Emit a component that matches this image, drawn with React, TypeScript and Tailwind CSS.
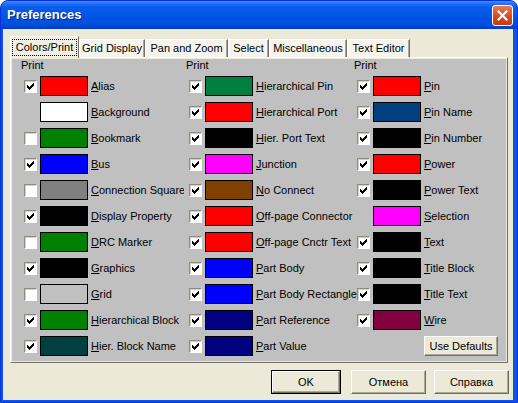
import React from "react";

type Item = { label: string; swatch: string; check: boolean | null };

const col1: Item[] = [
  { label: "Alias", swatch: "bg-[#ff0000]", check: true },
  { label: "Background", swatch: "bg-[#ffffff]", check: null },
  { label: "Bookmark", swatch: "bg-[#008000]", check: false },
  { label: "Bus", swatch: "bg-[#0000ff]", check: true },
  { label: "Connection Square", swatch: "bg-[#808080]", check: false },
  { label: "Display Property", swatch: "bg-[#000000]", check: true },
  { label: "DRC Marker", swatch: "bg-[#008000]", check: false },
  { label: "Graphics", swatch: "bg-[#000000]", check: true },
  { label: "Grid", swatch: "bg-[#c0c0c0]", check: false },
  { label: "Hierarchical Block", swatch: "bg-[#008000]", check: true },
  { label: "Hier. Block Name", swatch: "bg-[#004040]", check: true },
];

const col2: Item[] = [
  { label: "Hierarchical Pin", swatch: "bg-[#008040]", check: true },
  { label: "Hierarchical Port", swatch: "bg-[#ff0000]", check: true },
  { label: "Hier. Port Text", swatch: "bg-[#000000]", check: true },
  { label: "Junction", swatch: "bg-[#ff00ff]", check: true },
  { label: "No Connect", swatch: "bg-[#804000]", check: true },
  { label: "Off-page Connector", swatch: "bg-[#ff0000]", check: true },
  { label: "Off-page Cnctr Text", swatch: "bg-[#ff0000]", check: true },
  { label: "Part Body", swatch: "bg-[#0000ff]", check: true },
  { label: "Part Body Rectangle", swatch: "bg-[#0000ff]", check: true },
  { label: "Part Reference", swatch: "bg-[#000080]", check: true },
  { label: "Part Value", swatch: "bg-[#000080]", check: true },
];

const col3: Item[] = [
  { label: "Pin", swatch: "bg-[#ff0000]", check: true },
  { label: "Pin Name", swatch: "bg-[#004080]", check: true },
  { label: "Pin Number", swatch: "bg-[#000000]", check: true },
  { label: "Power", swatch: "bg-[#ff0000]", check: true },
  { label: "Power Text", swatch: "bg-[#000000]", check: true },
  { label: "Selection", swatch: "bg-[#ff00ff]", check: null },
  { label: "Text", swatch: "bg-[#000000]", check: true },
  { label: "Title Block", swatch: "bg-[#000000]", check: true },
  { label: "Title Text", swatch: "bg-[#000000]", check: true },
  { label: "Wire", swatch: "bg-[#800040]", check: true },
];

const tabs = ["Grid Display", "Pan and Zoom", "Select", "Miscellaneous", "Text Editor"];
const tabWidths = ["w-[66px]", "w-[83px]", "w-[41px]", "w-[78px]", "w-[63px]"];

function CheckBox({ checked }: { checked: boolean }) {
  return (
    <span className="flex h-[13px] w-[13px] shrink-0 items-center justify-center border border-t-[#8e8b80] border-l-[#8e8b80] border-r-white border-b-white bg-white shadow-[inset_1px_1px_0_#d4d0c8]">
      {checked && (
        <svg width="7" height="7" viewBox="0 0 7 7" shapeRendering="crispEdges">
          <path
            d="M6 0h1v1h-1z M5 1h2v1h-2z M0 2h1v1h-1z M4 2h3v1h-3z M0 3h2v1h-2z M3 3h3v1h-3z M0 4h5v1h-5z M1 5h3v1h-3z M2 6h1v1h-1z"
            fill="#000"
          />
        </svg>
      )}
    </span>
  );
}

function Row({ item, labelClass }: { item: Item; labelClass: string }) {
  return (
    <div className="flex h-[20px] items-center">
      <div className="ml-[3px] w-[13px] shrink-0">
        {item.check !== null && <CheckBox checked={item.check} />}
      </div>
      <div className={`ml-[3px] h-[20px] w-[48px] shrink-0 border border-black ${item.swatch}`} />
      <div className={`ml-[3px] whitespace-nowrap leading-[13px] ${labelClass}`}>
        <span className="underline underline-offset-[1px]">{item.label[0]}</span>
        {item.label.slice(1)}
      </div>
    </div>
  );
}

function Column({ items, width, labelClass, children }: { items: Item[]; width: string; labelClass: string; children?: React.ReactNode }) {
  return (
    <div className={`flex shrink-0 flex-col ${width}`}>
      <div className="h-[13px] leading-[13px]">Print</div>
      <div className="mt-[4px] flex flex-col gap-[6px]">
        {items.map((it) => (
          <Row key={it.label} item={it} labelClass={labelClass} />
        ))}
        {children}
      </div>
    </div>
  );
}

function Btn({ children, className = "" }: { children: React.ReactNode; className?: string }) {
  return (
    <div
      className={`flex items-center justify-center border border-t-white border-l-white border-r-[#716f64] border-b-[#716f64] bg-[#ece9d8] shadow-[inset_-1px_-1px_0_#aca899] text-black ${className}`}
    >
      {children}
    </div>
  );
}

export default function App() {
  return (
    <div className="h-[403px] w-[518px] bg-white font-['Liberation_Sans',Arial,sans-serif] text-[11px] text-black">
      <div className="flex h-[403px] w-[518px] flex-col overflow-hidden rounded-t-[8px] border border-[#0831d9] bg-[#0a56e4]">
        {/* Title bar */}
        <div className="flex h-[28px] shrink-0 items-center justify-between bg-[linear-gradient(to_bottom,#3d8fff_0px,#1e70f7_3px,#0a5ced_6px,#0056e6_14px,#0051de_22px,#0047d2_26px,#003cc2_28px)] pl-[6px] pr-[4px]">
          <span className="text-[13px] font-bold text-white [text-shadow:1px_1px_0_#0a1e80]">Preferences</span>
          <div className="flex h-[21px] w-[21px] items-center justify-center rounded-[3px] border border-white bg-[linear-gradient(to_bottom,#ec7a55,#d8461c_60%,#c83a12)]">
            <svg width="11" height="11" viewBox="0 0 11 11">
              <path d="M1.5 1.5 L9.5 9.5 M9.5 1.5 L1.5 9.5" stroke="#fff" strokeWidth="2.2" strokeLinecap="square" />
            </svg>
          </div>
        </div>

        {/* Client area */}
        <div className="ml-[2px] mr-[4px] mb-[2px] flex flex-1 flex-col bg-[#ece9d8]">
          {/* Tabs */}
          <div className="relative z-10 ml-[7px] mt-[7px] flex h-[21px] items-end">
            <div className="-mb-[1px] flex h-[22px] w-[69px] items-start justify-center border border-b-0 border-t-white border-l-white border-r-[#716f64] bg-[#f1efe4] pt-[2px]">
              <span className="border border-dotted border-black px-[3px] py-[1px] leading-[13px]">Colors/Print</span>
            </div>
            {tabs.map((t, i) => (
              <div
                key={t}
                className={`flex h-[18px] items-center justify-center border border-b-0 border-t-white border-l-white border-r-[#716f64] bg-[#f5f4ee] shadow-[inset_-1px_0_0_#aca899] leading-[13px] ${tabWidths[i]}`}
              >
                {t}
              </div>
            ))}
          </div>

          {/* Panel */}
          <div className="ml-[7px] h-[306px] w-[498px] border border-t-white border-l-white border-r-[#716f64] border-b-[#716f64] bg-[#ece9d8] p-[1px]">
            <div className="flex h-full bg-[#c0c0c0] pl-[9px]">
              <Column items={col1} width="w-[165px]" labelClass="w-[93px] overflow-hidden" />
              <Column items={col2} width="w-[168px]" labelClass="" />
              <Column items={col3} width="w-[150px]" labelClass="">
                <Btn className="ml-[70px] h-[20px] w-[74px]">Use Defaults</Btn>
              </Column>
            </div>
          </div>

          {/* Bottom buttons */}
          <div className="mt-[7px] flex justify-end pr-[4px]">
            <div className="mr-[10px] h-[24px] w-[70px] border border-black">
              <Btn className="h-full w-full">OK</Btn>
            </div>
            <Btn className="mr-[8px] h-[24px] w-[75px]">Отмена</Btn>
            <Btn className="h-[24px] w-[75px]">Справка</Btn>
          </div>
        </div>
      </div>
    </div>
  );
}
